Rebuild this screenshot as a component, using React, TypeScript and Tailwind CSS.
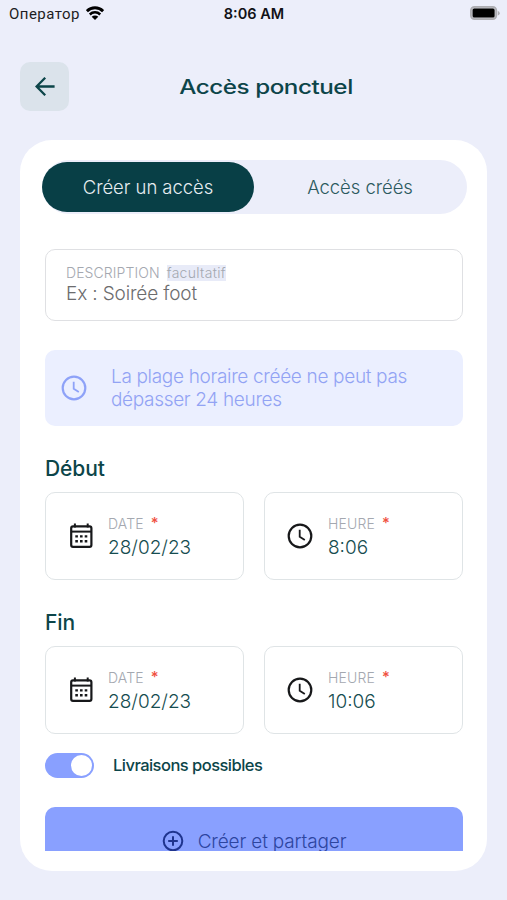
import type { ReactNode } from 'react'
import clsx from 'clsx'

interface IconProps {
  className?: string
}

function ClockIcon({ className }: IconProps) {
  return (
    <svg viewBox="0 0 26 26" fill="none" stroke="currentColor" className={className}>
      <circle cx="13" cy="13" r="11.3" strokeWidth="2.2" />
      <path d="M12.7 6.8v6.9l5.1 3.2" strokeWidth="1.8" />
    </svg>
  )
}

function CalendarIcon({ className }: IconProps) {
  return (
    <svg viewBox="0 0 24 26" fill="none" className={className}>
      <path d="M5.9 0.4v4M18.7 0.4v4" stroke="currentColor" strokeWidth="2" />
      <rect x="2.2" y="3.4" width="20.2" height="20.4" rx="1.8" stroke="currentColor" strokeWidth="2.2" />
      <path d="M2.3 8.6h20" stroke="currentColor" strokeWidth="2" />
      <path
        d="M6.3 12.2h2.6v2.4H6.3zM11 12.2h2.6v2.4H11zM15.7 12.2h2.6v2.4h-2.6zM6.3 17.1h2.6v2.4H6.3zM11 17.1h2.6v2.4H11zM15.7 17.1h2.6v2.4h-2.6z"
        fill="currentColor"
      />
    </svg>
  )
}

function StatusBar() {
  return (
    <div className="grid h-7 grid-cols-3 items-center pr-[7px] pl-[9px] text-black">
      <div className="flex items-center gap-[6px]">
        <span className="font-[Roboto] text-[15px] leading-4 tracking-[0.45px] text-[#1d1d22]">Оператор</span>
        <svg viewBox="0 0 18 14" className="mb-0.5 h-[14px] w-[18px]" fill="none" stroke="currentColor">
          <path d="M0.9 5.1a11.6 11.6 0 0 1 16.2 0" strokeWidth="2.9" />
          <path d="M3.8 8.5a7.4 7.4 0 0 1 10.4 0" strokeWidth="2.5" />
          <path d="M9 14 5.7 10.8a4.7 4.7 0 0 1 6.6 0z" fill="currentColor" stroke="none" />
        </svg>
      </div>
      <span className="pr-px text-center text-[14.5px] leading-4 font-semibold whitespace-nowrap text-[#111116]">
        8:06 AM
      </span>
      <svg viewBox="0 0 31 14" className="mb-0.5 h-[14px] w-[31px] justify-self-end">
        <rect x="1.9" y="0.9" width="25.4" height="12.2" rx="3.6" fill="#c8c8ce" stroke="#adadb2" strokeWidth="1.8" />
        <rect x="3.6" y="2.4" width="22" height="9.2" rx="1.6" fill="#000" />
        <path d="M28.8 5v4.4q1.9-.5 1.9-2.2T28.8 5z" fill="#adadb2" />
      </svg>
    </div>
  )
}

interface FieldProps {
  icon: ReactNode
  label: string
  value: string
}

function Field({ icon, label, value }: FieldProps) {
  return (
    <div className="flex h-[88px] flex-1 items-center rounded-[10px] border-[1.5px] border-[#dfe4e6] pl-[23px] text-[#17181a]">
      {icon}
      <div className="pt-[3px]">
        <div className="flex items-center text-[14px] leading-5 font-light tracking-[0.15px] text-[#a4a8b0]">
          {label}
          <span className="mb-[3px] ml-[7px] text-[15px] leading-[17px] font-medium text-[#f0503f]">*</span>
        </div>
        <div className="text-[19px] leading-[27px] font-light text-[#164d50]">{value}</div>
      </div>
    </div>
  )
}

interface SlotProps {
  title: string
  date: string
  time: string
  className?: string
}

function Slot({ title, date, time, className }: SlotProps) {
  return (
    <section className={className}>
      <h2 className="h-[37px] text-[21px] leading-7 font-[450] tracking-[-0.1px] text-[#0c4549]">{title}</h2>
      <div className="flex gap-5">
        <Field icon={<CalendarIcon className="mr-[15px] h-[26px] w-6" />} label="DATE" value={date} />
        <Field icon={<ClockIcon className="mr-[15px] -ml-px size-[26px]" />} label="HEURE" value={time} />
      </div>
    </section>
  )
}

const TABS = [
  { label: 'Créer un accès', active: true },
  { label: 'Accès créés', active: false },
]

export default function App() {
  return (
    <div className="h-[900px] w-[507px] overflow-hidden bg-[#eceefa] font-[Inter,sans-serif]">
      <StatusBar />

      <header className="mt-[34px] flex h-[49px] items-center px-5">
        <button className="flex size-[49px] items-center justify-center rounded-[10px] bg-[#dbe3eb] text-[#0c4549]">
          <svg viewBox="0 0 20 20" className="size-5" fill="none" stroke="currentColor" strokeWidth="2.3">
            <path d="M19.6 9.5H1.8M10.2 0.8 1.6 9.5l8.6 8.7" />
          </svg>
        </button>
        <h1 className="mr-[25px] flex-1 text-center">
          <span className="inline-block scale-x-[1.24] text-[19.5px] leading-7 font-[550] tracking-[-0.35px] text-[#0c4549]">
            Accès ponctuel
          </span>
        </h1>
      </header>

      <main className="mx-5 mt-[29px] h-[731px] rounded-[32px] bg-white pt-5">
        <div className="mr-5 ml-[22px] flex h-[54px] items-center rounded-full bg-[#eceefa]">
          {TABS.map((tab) => (
            <button
              key={tab.label}
              className={clsx(
                'h-[50px] w-[212px] rounded-full pt-0.5 text-[18.5px] font-light tracking-[-0.05px]',
                tab.active ? 'bg-[#083f46] text-[#e6edf1]' : 'text-[#2c5a5f]'
              )}
            >
              {tab.label}
            </button>
          ))}
        </div>

        <div className="mt-[35px] mr-6 ml-[25px] h-[602px] overflow-hidden">
          <div className="h-[72px] rounded-[10px] border-[1.5px] border-[#dfe0e3] pt-[13px] pl-5">
            <div className="flex items-center gap-[7px] text-[14px] leading-5 font-light tracking-[0.1px] text-[#a4a8b0]">
              DESCRIPTION
              <span className="bg-[#e8ebf8] leading-4 tracking-[0.3px]">facultatif</span>
            </div>
            <div className="text-[19px] leading-[22px] font-light tracking-[-0.15px] text-[#6c6c6e]">
              Ex : Soirée foot
            </div>
          </div>

          <div className="mt-[29px] flex h-[76px] items-center rounded-[10px] bg-[#ebefff] pl-4">
            <ClockIcon className="size-[26px] text-[#8ea2f8]" />
            <p className="ml-6 text-[19px] leading-[23px] font-light tracking-[-0.33px] text-[#92a3f4]">
              La plage horaire créée ne peut pas
              <br />
              dépasser 24 heures
            </p>
          </div>

          <Slot className="mt-[29px]" title="Début" date="28/02/23" time="8:06" />
          <Slot className="mt-[29px]" title="Fin" date="28/02/23" time="10:06" />

          <div className="mt-[19px] flex h-[25px] items-center">
            <div className="flex h-[25px] w-[49px] items-center justify-end rounded-full bg-[#89a0ff] pr-0.5">
              <div className="size-[21px] rounded-full bg-white" />
            </div>
            <span className="ml-[19px] text-[16.5px] font-[450] tracking-[-0.53px] text-[#0c4549]">
              Livraisons possibles
            </span>
          </div>

          <button className="mt-[29px] flex h-[68px] w-full items-center justify-center rounded-[10px] bg-[#89a0ff] text-[19px] font-light tracking-[-0.15px] text-[#2d459f]">
            <svg viewBox="0 0 22 22" className="mr-3.5 size-[22px] text-[#1f348e]" fill="none" stroke="currentColor" strokeWidth="2">
              <circle cx="11" cy="11" r="9.3" />
              <path d="M11 6.2v9.6M6.2 11h9.6" />
            </svg>
            <span className="pt-0.5">Créer et partager</span>
          </button>
        </div>
      </main>
    </div>
  )
}
